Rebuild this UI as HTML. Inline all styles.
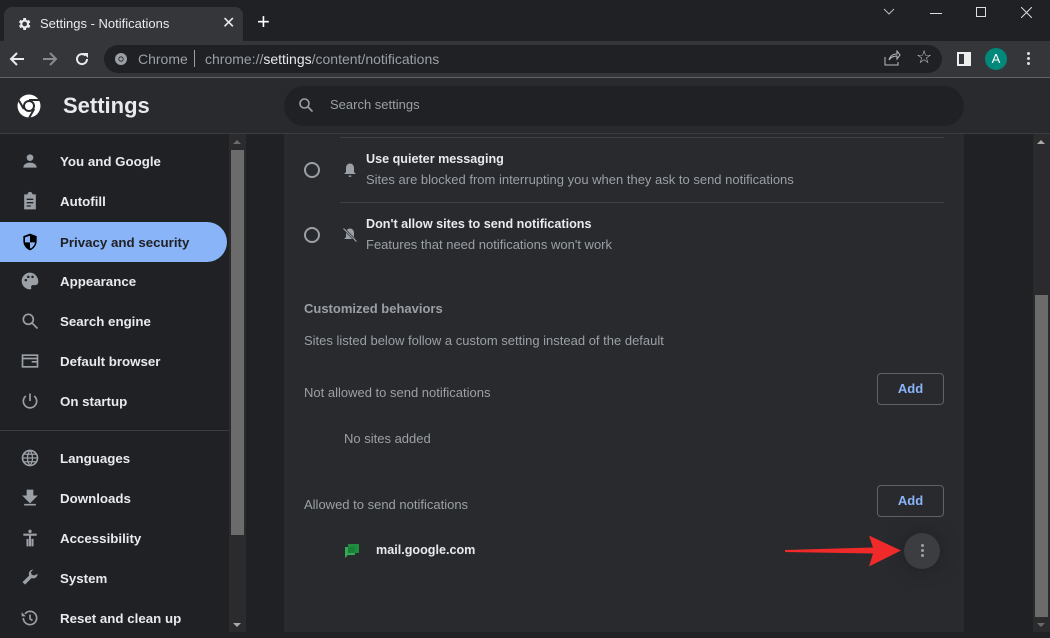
<!DOCTYPE html>
<html><head><style>
*{margin:0;padding:0;box-sizing:border-box}
body{width:1050px;height:632px;overflow:hidden;background:#202124;font-family:"Liberation Sans",sans-serif;position:relative;color:#e8eaed}
.a{position:absolute}
.nav{position:absolute;left:0;width:228px;height:40px;display:flex;align-items:center;font-size:13.3px;font-weight:bold;color:#e8eaed}
.nav svg{position:absolute;left:20px;width:20px;height:20px}
.nav span{position:absolute;left:60px}
.t{font-size:13px;color:#9aa0a6}
.btn{position:absolute;left:877px;width:67px;height:32px;border:1px solid #5f6368;border-radius:4px;color:#8ab4f8;font-size:13px;font-weight:bold;text-align:center;line-height:30px}
</style></head><body>
<div class="a" style="left:4px;top:7px;width:239px;height:34px;background:#35363a;border-radius:8px 8px 0 0"></div>
<svg class="a" style="left:16px;top:16px" width="16" height="16" viewBox="0 0 24 24"><path fill="#e8eaed" d="M19.4 13a7.5 7.5 0 000-2l2.1-1.6-2-3.5-2.5 1a7 7 0 00-1.7-1L15 3h-4l-.4 2.9a7 7 0 00-1.7 1l-2.5-1-2 3.5L6.6 11a7.5 7.5 0 000 2l-2.1 1.6 2 3.5 2.5-1a7 7 0 001.7 1L11 21h4l.4-2.9a7 7 0 001.7-1l2.5 1 2-3.5zM13 15.5a3.5 3.5 0 110-7 3.5 3.5 0 010 7z"/></svg>
<div class="a" style="left:40px;top:16px;font-size:13px;color:#e8eaed">Settings - Notifications</div>
<div class="a" style="left:222px;top:13px;font-size:16px;color:#e8eaed">✕</div>
<div class="a" style="left:257px;top:9px;font-size:22px;color:#fff">+</div>
<svg class="a" style="left:883px;top:8px" width="12" height="8"><path d="M1 1l5 5 5-5" stroke="#bbb" fill="none"/></svg>
<div class="a" style="left:930px;top:13px;width:12px;height:1px;background:#ddd"></div>
<div class="a" style="left:976px;top:7px;width:10px;height:10px;border:1px solid #ddd"></div>
<svg class="a" style="left:1021px;top:7px" width="11" height="11"><path d="M0 0l11 11M11 0L0 11" stroke="#ddd"/></svg>
<div class="a" style="left:0;top:41px;width:1050px;height:36px;background:#35363a"></div>
<div class="a" style="left:0;top:77px;width:1050px;height:1px;background:#5f6368"></div>
<svg class="a" style="left:9px;top:51px" width="16" height="16" viewBox="0 0 16 16"><path d="M15 8H2M8 2L2 8l6 6" stroke="#e8eaed" stroke-width="2" fill="none"/></svg>
<svg class="a" style="left:42px;top:51px" width="16" height="16" viewBox="0 0 16 16"><path d="M1 8h13M8 2l6 6-6 6" stroke="#8a8b8d" stroke-width="2" fill="none"/></svg>
<svg class="a" style="left:74px;top:51px" width="16" height="16" viewBox="0 0 16 16"><path d="M13 8a5 5 0 11-1.5-3.5" stroke="#e8eaed" stroke-width="2" fill="none"/><path d="M9 2h5v5z" fill="#e8eaed"/></svg>
<div class="a" style="left:104px;top:45px;width:838px;height:28px;background:#202124;border-radius:14px"></div>
<svg class="a" style="left:114px;top:52px" width="14" height="14" viewBox="0 0 14 14"><circle cx="7" cy="7" r="6" fill="#9aa0a6"/><circle cx="7" cy="7" r="2.6" fill="#202124"/><circle cx="7" cy="7" r="1.8" fill="#9aa0a6"/></svg>
<div class="a" style="left:138px;top:51px;font-size:14px;color:#9aa0a6">Chrome</div>
<div class="a" style="left:194px;top:50px;width:1px;height:17px;background:#9aa0a6"></div>
<div class="a" style="left:205px;top:51px;font-size:14px;color:#9aa0a6">chrome://<span style="color:#e8eaed">settings</span>/content/notifications</div>
<svg class="a" style="left:884px;top:50px" width="17" height="16" viewBox="0 0 17 16"><path d="M1 7v8h13v-3M5 10c1-4 4-6 8-6V1l3 4-3 4V6c-3 0-6 1-8 4z" stroke="#bbb" fill="none"/></svg>
<div class="a" style="left:916px;top:47px;font-size:18px;color:#ccc">☆</div>
<div class="a" style="left:957px;top:52px;width:14px;height:14px;border:2px solid #eee;border-right-width:7px"></div>
<div class="a" style="left:985px;top:48px;width:22px;height:22px;border-radius:50%;background:#00897b;color:#fff;font-size:13px;text-align:center;line-height:22px">A</div>
<div class="a" style="left:1027px;top:52px;width:3px;height:3px;background:#ddd;border-radius:50%;box-shadow:0 5px #ddd,0 10px #ddd"></div>
<div class="a" style="left:0;top:78px;width:1050px;height:55px;background:#292a2d"></div>
<div class="a" style="left:0;top:133px;width:1050px;height:1px;background:#3c3d40"></div>
<svg class="a" style="left:16px;top:93px" width="26" height="26" viewBox="0 0 26 26"><circle cx="13" cy="13" r="11.5" fill="#fff"/><circle cx="13" cy="13" r="6" fill="#292a2d"/><circle cx="13" cy="13" r="4" fill="#fff"/><path d="M13 7h11M7.8 16l-5.5-9.5M18.2 16l-5.6 9.7" stroke="#292a2d" stroke-width="2"/></svg>
<div class="a" style="left:63px;top:93px;font-size:22px;font-weight:bold;color:#e8eaed">Settings</div>
<div class="a" style="left:284px;top:86px;width:680px;height:40px;background:#202124;border-radius:20px"></div>
<svg class="a" style="left:298px;top:97px" width="16" height="16" viewBox="0 0 16 16"><circle cx="6.5" cy="6.5" r="4.5" stroke="#9aa0a6" stroke-width="1.6" fill="none"/><path d="M10 10l4.5 4.5" stroke="#9aa0a6" stroke-width="1.6"/></svg>
<div class="a" style="left:330px;top:97px;font-size:13px;color:#9aa0a6">Search settings</div>
<div class="a" style="left:0;top:222px;width:227px;height:40px;background:#8ab4f8;border-radius:0 20px 20px 0"></div>
<div class="nav" style="top:141px"><svg viewBox="0 0 24 24"><circle cx="12" cy="8" r="4" fill="#9aa0a6"/><path d="M4 20c0-4 4-6 8-6s8 2 8 6z" fill="#9aa0a6"/></svg><span>You and Google</span></div>
<div class="nav" style="top:181px"><svg viewBox="0 0 24 24"><path d="M5 4h4a3 3 0 016 0h4v18H5z" fill="#9aa0a6"/><path d="M8 10h8M8 14h8M8 18h5" stroke="#202124" stroke-width="1.6"/></svg><span>Autofill</span></div>
<div class="nav" style="top:222px;color:#202124"><svg viewBox="0 0 24 24"><path d="M12 2l8 3v6c0 5-3.5 9.5-8 11-4.5-1.5-8-6-8-11V5z" fill="#000"/><path d="M12 4.5v8H6V6.5zM12 12.5h6c-.5 3.5-3 6.5-6 7.5z" fill="#8ab4f8"/></svg><span>Privacy and security</span></div>
<div class="nav" style="top:261px"><svg viewBox="0 0 24 24"><path d="M12 2a10 10 0 000 20c1.5 0 2-1 1.5-2-.7-1.4.3-3 2-3H18a4 4 0 004-4c0-6-4.5-11-10-11z" fill="#9aa0a6"/><circle cx="7" cy="11" r="1.5" fill="#202124"/><circle cx="10" cy="7" r="1.5" fill="#202124"/><circle cx="15" cy="7" r="1.5" fill="#202124"/></svg><span>Appearance</span></div>
<div class="nav" style="top:301px"><svg viewBox="0 0 24 24"><circle cx="10" cy="10" r="6" stroke="#9aa0a6" stroke-width="2" fill="none"/><path d="M14.5 14.5L21 21" stroke="#9aa0a6" stroke-width="2"/></svg><span>Search engine</span></div>
<div class="nav" style="top:341px"><svg viewBox="0 0 24 24"><rect x="3" y="5" width="18" height="14" stroke="#9aa0a6" stroke-width="2" fill="none"/><path d="M3 9h18M14 13h7" stroke="#9aa0a6" stroke-width="2"/></svg><span>Default browser</span></div>
<div class="nav" style="top:381px"><svg viewBox="0 0 24 24"><path d="M12 3v9M7 6a8 8 0 1010 0" stroke="#9aa0a6" stroke-width="2" fill="none"/></svg><span>On startup</span></div>
<div class="a" style="left:0;top:430px;width:229px;height:1px;background:#3c3d40"></div>
<div class="nav" style="top:438px"><svg viewBox="0 0 24 24"><circle cx="12" cy="12" r="9" stroke="#9aa0a6" stroke-width="2" fill="none"/><path d="M3 12h18M12 3c-4 5-4 13 0 18M12 3c4 5 4 13 0 18M5 7.5h14M5 16.5h14" stroke="#9aa0a6" stroke-width="1.5" fill="none"/></svg><span>Languages</span></div>
<div class="nav" style="top:478px"><svg viewBox="0 0 24 24"><path d="M9 3h6v7h4l-7 7-7-7h4zM5 20h14" stroke="#9aa0a6" stroke-width="2" fill="#9aa0a6"/></svg><span>Downloads</span></div>
<div class="nav" style="top:518px"><svg viewBox="0 0 24 24"><circle cx="12" cy="4" r="2" fill="#9aa0a6"/><path d="M4 8h16M12 8v14M9 22v-9M15 22v-9" stroke="#9aa0a6" stroke-width="2.5"/></svg><span>Accessibility</span></div>
<div class="nav" style="top:558px"><svg viewBox="0 0 24 24"><path d="M21 7a5 5 0 01-7 5L6 20l-3-3 8-8a5 5 0 015-7l-3 3 1 3 3 1z" fill="#9aa0a6"/></svg><span>System</span></div>
<div class="nav" style="top:598px"><svg viewBox="0 0 24 24"><path d="M4 12a8 8 0 108-8 8 8 0 00-6 3" stroke="#9aa0a6" stroke-width="2" fill="none"/><path d="M2 5v5h5z" fill="#9aa0a6"/><path d="M12 8v5l3 2" stroke="#9aa0a6" stroke-width="2" fill="none"/></svg><span>Reset and clean up</span></div>
<div class="a" style="left:229px;top:134px;width:17px;height:498px;background:#2b2b2d"></div>
<div class="a" style="left:231px;top:150px;width:13px;height:385px;background:#6b6b6b"></div>
<div class="a" style="left:233px;top:140px;width:0;height:0;border:4px solid transparent;border-bottom-color:#6b6b6b;border-top:0"></div>
<div class="a" style="left:233px;top:623px;width:0;height:0;border:4px solid transparent;border-top-color:#aaa;border-bottom:0"></div>
<div class="a" style="left:284px;top:134px;width:680px;height:498px;background:#292a2d"></div>
<div class="a" style="left:340px;top:137px;width:604px;height:1px;background:#3f4043"></div>
<div class="a" style="left:340px;top:202px;width:604px;height:1px;background:#3f4043"></div>
<div class="a" style="left:304px;top:162px;width:16px;height:16px;border:2px solid #9aa0a6;border-radius:50%"></div>
<div class="a" style="left:304px;top:227px;width:16px;height:16px;border:2px solid #9aa0a6;border-radius:50%"></div>
<svg class="a" style="left:342px;top:162px" width="16" height="16" viewBox="0 0 16 16"><path d="M8 1.5c-2.5 0-4 2-4 4.5v4l-1.5 1.5v.5h11v-.5L12 10V6c0-2.5-1.5-4.5-4-4.5z" fill="#9aa0a6"/><path d="M6.5 13.5h3a1.5 1.5 0 01-3 0z" fill="#9aa0a6"/></svg>
<svg class="a" style="left:342px;top:227px" width="16" height="16" viewBox="0 0 16 16"><path d="M8 1.5c-2.5 0-4 2-4 4.5v4l-1.5 1.5v.5h11v-.5L12 10V6c0-2.5-1.5-4.5-4-4.5z" fill="#9aa0a6"/><path d="M1.5 1.5l13 13" stroke="#292a2d" stroke-width="2.5"/><path d="M1.5 1.5l13 13" stroke="#9aa0a6" stroke-width="1.2"/></svg>
<div class="a" style="left:366px;top:152px;font-size:12.6px;font-weight:bold;color:#e8eaed">Use quieter messaging</div>
<div class="a t" style="left:366px;top:172px">Sites are blocked from interrupting you when they ask to send notifications</div>
<div class="a" style="left:366px;top:217px;font-size:12.6px;font-weight:bold;color:#e8eaed">Don't allow sites to send notifications</div>
<div class="a t" style="left:366px;top:237px">Features that need notifications won't work</div>
<div class="a t" style="left:304px;top:301px;font-weight:bold">Customized behaviors</div>
<div class="a t" style="left:304px;top:333px">Sites listed below follow a custom setting instead of the default</div>
<div class="a t" style="left:304px;top:385px">Not allowed to send notifications</div>
<div class="btn" style="top:373px">Add</div>
<div class="a t" style="left:344px;top:431px">No sites added</div>
<div class="a t" style="left:304px;top:497px">Allowed to send notifications</div>
<div class="btn" style="top:485px">Add</div>
<svg class="a" style="left:344px;top:543px" width="16" height="16" viewBox="0 0 16 16"><path d="M4 1h11v9H4z" fill="#1e8e3e"/><path d="M1 4h10v8H4l-3 3z" fill="#34a853"/><path d="M4 4h7v6H4z" fill="#188038"/></svg>
<div class="a" style="left:376px;top:543px;font-size:12.6px;font-weight:bold;color:#e8eaed">mail.google.com</div>
<div class="a" style="left:904px;top:533px;width:36px;height:36px;border-radius:50%;background:#3c3d40;box-shadow:0 0 20px rgba(0,0,0,.25)"></div>
<div class="a" style="left:921px;top:544px;width:3px;height:3px;border-radius:50%;background:#9aa0a6;box-shadow:0 5px #9aa0a6,0 10px #9aa0a6"></div>
<svg class="a" style="left:784px;top:533px" width="118" height="35" viewBox="0 0 118 35"><path d="M1 17l88-2.5-4-12 32 15-32 16 4-13L1 19z" fill="#f02a2a"/></svg>
<div class="a" style="left:1033px;top:134px;width:17px;height:498px;background:#2b2b2d"></div>
<div class="a" style="left:1035px;top:295px;width:13px;height:322px;background:#6b6b6b"></div>
<div class="a" style="left:1037px;top:140px;width:0;height:0;border:4px solid transparent;border-bottom-color:#aaa;border-top:0"></div>
<div class="a" style="left:1037px;top:623px;width:0;height:0;border:4px solid transparent;border-top-color:#6b6b6b;border-bottom:0"></div>
</body></html>
